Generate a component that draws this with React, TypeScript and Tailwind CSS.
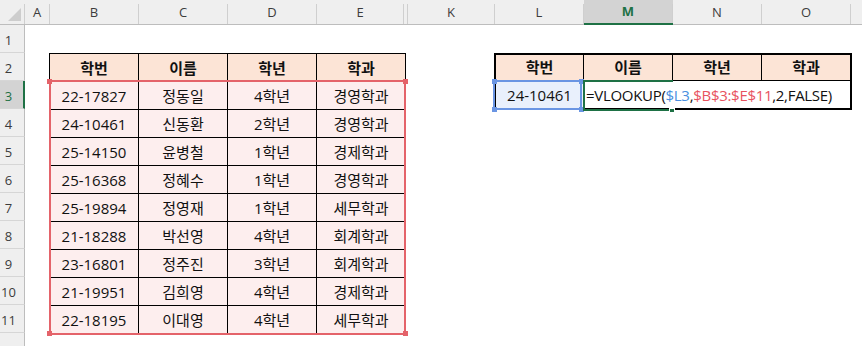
import React from "react";

const FONT = { fontFamily: "'Open Sans', 'Noto Sans CJK KR', sans-serif" };

const rows: string[][] = [
  ["22-17827", "정동일", "4학년", "경영학과"],
  ["24-10461", "신동환", "2학년", "경영학과"],
  ["25-14150", "윤병철", "1학년", "경제학과"],
  ["25-16368", "정혜수", "1학년", "경영학과"],
  ["25-19894", "정영재", "1학년", "세무학과"],
  ["21-18288", "박선영", "4학년", "회계학과"],
  ["23-16801", "정주진", "3학년", "회계학과"],
  ["21-19951", "김희영", "4학년", "경제학과"],
  ["22-18195", "이대영", "4학년", "세무학과"],
];

const heads = ["학번", "이름", "학년", "학과"];

const colHeads: { label: string; w: string; sel?: boolean }[] = [
  { label: "A", w: "w-[25px]" },
  { label: "B", w: "w-[89px]" },
  { label: "C", w: "w-[89px]" },
  { label: "D", w: "w-[89px]" },
  { label: "E", w: "w-[87px]" },
  { label: "", w: "w-[4px]" },
  { label: "K", w: "w-[87px]" },
  { label: "L", w: "w-[89px]" },
  { label: "M", w: "w-[89px]", sel: true },
  { label: "N", w: "w-[89px]" },
  { label: "O", w: "w-[89px]" },
];

function ColHeader() {
  return (
    <div className="flex h-[25px] text-[13px] text-[#3c3c3c]">
      <div className="flex w-[25px] h-[25px] border-b border-[#bdbdbd] bg-[#efefef]">
        <div className="flex-1 relative">
          <svg width="24" height="24" className="absolute left-0 top-0">
            <polygon points="21,8 21,21 8,21" fill="#cdcdcd" />
          </svg>
        </div>
        <div className="w-px mt-[4px] bg-[#cfcfcf]" />
      </div>
      {colHeads.map((c, i) => (
        <div
          key={i}
          className={`flex ${c.w} h-[25px] ${
            c.sel
              ? "border-b-2 border-[#1e7145] bg-[#d3d3d3] text-[#1e7145] font-bold"
              : "border-b border-[#bdbdbd] bg-[#efefef]"
          }`}
        >
          <div className="flex-1 flex items-center justify-center pt-[1px]">{c.label}</div>
          <div className="w-px mt-[4px] bg-[#cfcfcf]" />
        </div>
      ))}
      <div className="flex-1 h-[25px] border-b border-[#bdbdbd] bg-[#efefef]" />
    </div>
  );
}

function RowHeader() {
  const nums = [1, 2, 3, 4, 5, 6, 7, 8, 9, 10, 11, 12];
  return (
    <div className="flex flex-col w-[25px] text-[13px] text-[#3c3c3c]">
      {nums.map((n) => (
        <div
          key={n}
          className={`flex items-center h-[28px] shrink-0 border-b border-[#d6d6d6] ${
            n === 3
              ? "bg-[#d3d3d3] border-r-2 border-r-[#1e7145] text-[#1e7145]"
              : "bg-[#efefef] border-r border-r-[#bdbdbd]"
          }`}
        >
          <span className="w-[17px] text-center pt-[4px]">{n === 12 ? "" : n}</span>
        </div>
      ))}
    </div>
  );
}

function Sq({ cls, color }: { cls: string; color: string }) {
  return <div className={`absolute w-[5px] h-[5px] ${cls}`} style={{ backgroundColor: color }} />;
}

function LeftTable() {
  return (
    <div className="relative w-[357px] border-r border-b border-black text-[15px] text-[#111]">
      <div className="flex">
        {heads.map((h) => (
          <div
            key={h}
            className="w-[89px] h-[28px] border-l border-t border-black bg-[#fce4d6] font-bold flex items-center justify-center pt-[1px]"
          >
            {h}
          </div>
        ))}
      </div>
      {rows.map((r, i) => (
        <div key={i} className="flex">
          {r.map((v, j) => (
            <div
              key={j}
              className="w-[89px] h-[28px] border-l border-t border-black bg-[#fdeeee] flex items-center justify-center pt-[2px]"
            >
              {v}
            </div>
          ))}
        </div>
      ))}
      <div className="absolute left-0 top-[27px] w-[357px] h-[255px] border-2 border-[#e4636a]" />
      <Sq cls="left-[-2px] top-[26px]" color="#e4636a" />
      <Sq cls="left-[354px] top-[26px]" color="#e4636a" />
      <Sq cls="left-[-2px] top-[278px]" color="#e4636a" />
      <Sq cls="left-[354px] top-[278px]" color="#e4636a" />
    </div>
  );
}

function RightTable() {
  return (
    <div className="relative ml-[88px] w-[358px] text-[15px] text-[#111]">
      <div className="border-2 border-black w-[358px]">
        <div className="flex h-[26px] border-b border-black">
          {heads.map((h, i) => (
            <div
              key={h}
              className={`${i === 0 ? "w-[87px]" : "w-[89px] border-l border-black"} h-full bg-[#fce4d6] font-bold flex items-center justify-center`}
            >
              {h}
            </div>
          ))}
        </div>
        <div className="flex h-[27px]">
          <div className="w-[87px] h-full bg-[#e9f0fc] flex items-center justify-center pt-[1px]">24-10461</div>
          <div className="flex-1 h-full bg-white flex items-center pl-[3px] pt-[1px] whitespace-nowrap tracking-[-0.3px]">
            <span>=VLOOKUP(</span>
            <span className="text-[#4a8fe0]">$L3</span>
            <span>,</span>
            <span className="text-[#e8535f]">$B$3:$E$11</span>
            <span>,2,FALSE)</span>
          </div>
        </div>
      </div>
      <div className="absolute left-[-1px] top-[27px] w-[89px] h-[30px] border-2 border-[#6a95e3]" />
      <Sq cls="left-[-2px] top-[26px]" color="#6a95e3" />
      <Sq cls="left-[85px] top-[26px]" color="#6a95e3" />
      <Sq cls="left-[-2px] top-[54px]" color="#6a95e3" />
      <Sq cls="left-[85px] top-[54px]" color="#6a95e3" />
      <div className="absolute left-[89px] top-[27px] w-[90px] h-[31px] border-2 border-r-0 border-[#1e7145]" />
      <div className="absolute left-[175px] top-[55px] w-[6px] h-[5px] bg-[#1e7145] border border-white" />
    </div>
  );
}

export default function App() {
  return (
    <div className="w-[862px] h-[346px] overflow-hidden bg-white" style={FONT}>
      <ColHeader />
      <div className="flex">
        <RowHeader />
        <div className="flex-1 pt-[28px] pl-[24px] flex items-start">
          <LeftTable />
          <RightTable />
        </div>
      </div>
    </div>
  );
}
